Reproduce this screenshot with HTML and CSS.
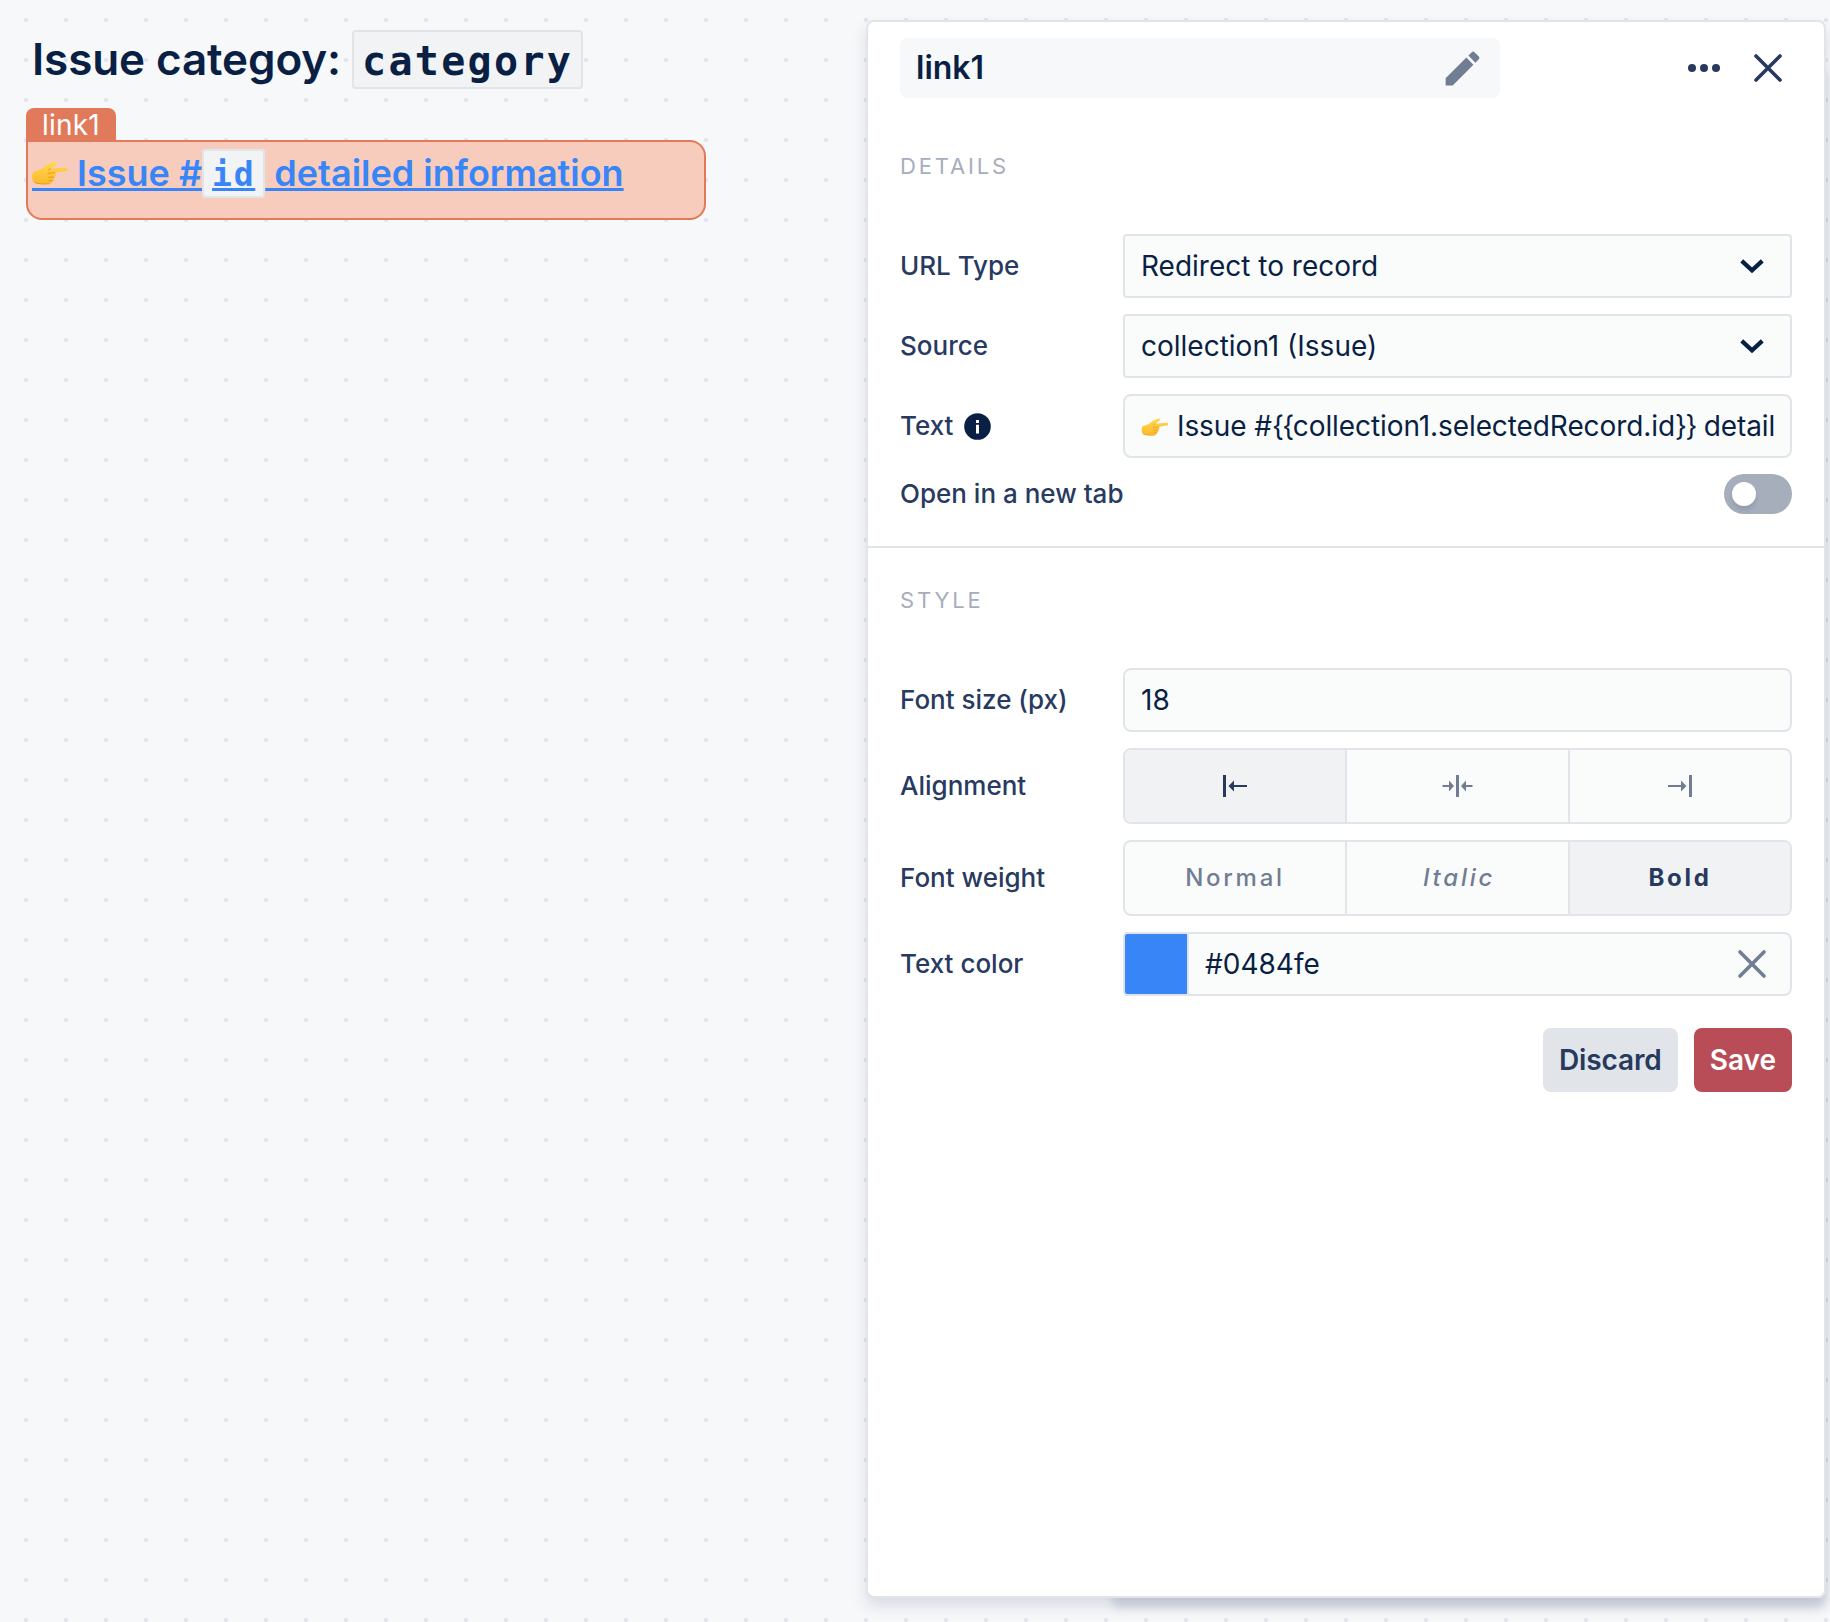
FILE: index.html
```html
<!DOCTYPE html>
<html lang="en">
<head>
<meta charset="utf-8">
<title>link1 settings</title>
<link rel="stylesheet" href="styles.css">
</head>
<body>
<svg class="defs" width="0" height="0" aria-hidden="true">
  <defs>
    <linearGradient id="skin" x1="0" y1="0" x2="0" y2="1">
      <stop offset="0" stop-color="#ffd84f"/>
      <stop offset="1" stop-color="#fdb92c"/>
    </linearGradient>
    <symbol id="hand" viewBox="0 0 36 24">
      <path fill="url(#skin)" d="M1.500 11C5 9.500 8 9 11 7L14 4.500C17 2.500 20 1.500 22.500 .5C25 .2 25.500 2.300 23.500 3.800L18.500 7.600L33.500 6.400C36.500 6.400 36.500 10 33.500 10.100L23.500 11.500C24.500 13 24 15 22.500 15.900C23 17.600 22.300 18.900 20.800 19.400C20.800 21.300 19.500 22.700 17.500 22.800C11 23.400 5.500 22.800 2 21.300C-.3 19.500-.3 13 1.500 11Z"/>
      <path fill="none" stroke="#e9981c" stroke-width="1" stroke-linecap="round" d="M22.500 11.700L16 12.500M21.500 16L17 16.300M20 19.500L17 19.700M3 21.700C7 23 12 23.300 17 22.800M18.500 7.600L16.500 9"/>
    </symbol>
    <symbol id="cross" viewBox="0 0 30 30">
      <path fill="none" stroke="currentColor" stroke-width="3.600" stroke-linecap="round" d="M3 3L27 27M27 3L3 27"/>
    </symbol>
    <symbol id="chevron" viewBox="0 0 24 16">
      <path fill="none" stroke="currentColor" stroke-width="4.200" d="M1.700 2.900L12 12.300L22.300 2.900"/>
    </symbol>
  </defs>
</svg>
<div class="app">
  <main class="canvas">
    <h1 class="heading">Issue categoy: <code class="token token-heading">category</code></h1>
    <div class="widget">
      <span class="widget-tag">link1</span>
      <div class="widget-body">
        <a class="link"><span class="link-emoji"><svg class="hand-lg"><use href="#hand"/></svg></span>Issue #<code class="token">id</code> detailed information</a>
      </div>
    </div>
  </main>

  <div class="panel-wrap">
    <aside class="panel">
      <header class="panel-header">
        <div class="name">
          <span class="name-text">link1</span>
          <svg class="pencil" viewBox="0 0 24 24"><path fill="currentColor" d="M3 17.250V21h3.750L17.810 9.940l-3.750-3.750L3 17.250zM20.710 7.040c.39-.39.39-1.020 0-1.410l-2.340-2.340c-.39-.39-1.020-.39-1.410 0l-1.830 1.830 3.750 3.750 1.830-1.830z"/></svg>
        </div>
        <div class="actions">
          <svg class="more" viewBox="0 0 32 8"><circle cx="4" cy="4" r="4"/><circle cx="16" cy="4" r="4"/><circle cx="28" cy="4" r="4"/></svg>
          <svg class="close"><use href="#cross"/></svg>
        </div>
      </header>

      <section class="section details">
        <h2 class="section-title">DETAILS</h2>
        <div class="row">
          <span class="label">URL Type</span>
          <div class="field select"><span>Redirect to record</span><svg class="chevron"><use href="#chevron"/></svg></div>
        </div>
        <div class="row">
          <span class="label">Source</span>
          <div class="field select"><span>collection1 (Issue)</span><svg class="chevron"><use href="#chevron"/></svg></div>
        </div>
        <div class="row">
          <span class="label">Text
            <svg class="info" viewBox="0 0 27 27"><circle cx="13.500" cy="13.500" r="13.300" fill="#0a1f44"/><path fill="#fff" d="M12 7h3v3h-3zM12 11.800h3V20.500h-3z"/></svg>
          </span>
          <div class="field"><span class="clip"><svg class="hand-sm"><use href="#hand"/></svg>Issue #<span class="brace">{{</span>collection1.selectedRecord.id<span class="brace">}}</span> detailed information</span></div>
        </div>
        <div class="row-toggle">
          <span class="label">Open in a new tab</span>
          <span class="toggle"><span class="knob"></span></span>
        </div>
      </section>

      <section class="section style">
        <h2 class="section-title">STYLE</h2>
        <div class="row">
          <span class="label">Font size (px)</span>
          <div class="field">18</div>
        </div>
        <div class="row">
          <span class="label">Alignment</span>
          <div class="segments">
            <span class="segment active"><svg class="align-icon" viewBox="0 0 32 24"><path d="M4 1h3v22H4zM9.500 12L15 6.500V11H28v2H15v4.500z"/></svg></span>
            <span class="segment"><svg class="align-icon" viewBox="0 0 32 24"><path d="M14 1h3v22h-3zM12 12L7 6.500V11H.500v2H7v4.500zM19 12L24 6.500V11H30.500v2H24v4.500z"/></svg></span>
            <span class="segment"><svg class="align-icon" viewBox="0 0 32 24"><path d="M25 1h3v22h-3zM22.500 12L17 6.500V11H4v2H17v4.500z"/></svg></span>
          </div>
        </div>
        <div class="row">
          <span class="label">Font weight</span>
          <div class="segments segments-text">
            <span class="segment">Normal</span>
            <span class="segment italic">Italic</span>
            <span class="segment active bold">Bold</span>
          </div>
        </div>
        <div class="row">
          <span class="label">Text color</span>
          <div class="field color"><span class="swatch"></span><span class="hex">#0484fe</span><svg class="clear"><use href="#cross"/></svg></div>
        </div>
        <div class="buttons">
          <button class="btn discard">Discard</button>
          <button class="btn save">Save</button>
        </div>
      </section>
    </aside>
  </div>
</div>
</body>
</html>
```
FILE: styles.css
```css
* { box-sizing: border-box; }

body {
  margin: 0;
  font-family: Inter, "Liberation Sans", sans-serif;
  color: #0a1f44;
  background: #f7f8fa;
}

.defs { display: block; height: 0; }

.app {
  display: flex;
  height: 1622px;
  overflow: hidden;
  background-color: #f7f8fa;
  background-image: radial-gradient(circle at 20px 20px, #e1e4e8 1.800px, transparent 2.400px);
  background-size: 40px 40px;
  background-position: 6px 0;
}

.canvas {
  flex: 0 0 866px;
  padding: 30px 26px 0;
}

.heading {
  margin: 0;
  padding-left: 6px;
  height: 78px;
  font-size: 44px;
  line-height: 58px;
  font-weight: 600;
  letter-spacing: -0.100px;
  white-space: nowrap;
}

.token {
  font-family: "DejaVu Sans Mono", monospace;
  font-size: 33px;
  line-height: 0;
  font-weight: 700;
  letter-spacing: 1.730px;
  padding: 4px 8px 2px;
  background: #f1f3f5;
  border: 2px solid #e1e4e8;
  border-radius: 4px;
}

.token-heading {
  font-size: 40px;
  letter-spacing: 2.320px;
  padding: 6px 8px 3px;
}

.widget {
  display: flex;
  flex-direction: column;
  align-items: flex-start;
  width: 680px;
}

.widget-tag {
  height: 32px;
  padding: 0 16px;
  font-size: 28px;
  line-height: 34px;
  font-weight: 400;
  letter-spacing: 0.200px;
  color: #fff;
  background: #e07a5a;
  border-radius: 8px 8px 0 0;
}

.widget-body {
  width: 680px;
  height: 80px;
  padding: 7px 4px;
  background: #f7ccbd;
  border: 2px solid #e07a5a;
  border-radius: 0 16px 16px 16px;
}

.link {
  display: block;
  font-size: 36px;
  line-height: 48px;
  font-weight: 600;
  color: #3785f7;
  white-space: nowrap;
  text-decoration: underline;
  text-decoration-thickness: 3px;
  text-underline-offset: 2px;
  text-decoration-skip-ink: none;
}

.link-emoji {
  display: inline-block;
  overflow: hidden;
  width: 45px;
  height: 30px;
  vertical-align: -5px;
  border-bottom: 3px solid #3785f7;
}

.hand-lg { display: block; width: 36px; height: 24px; }

.panel-wrap {
  position: relative;
  isolation: isolate;
  flex: 0 0 960px;
  margin: 20px 0 24px;
}

.panel-wrap::before {
  content: "";
  position: absolute;
  z-index: -1;
  left: 246px;
  right: 0;
  top: 40px;
  bottom: 0;
  border-radius: 8px;
  box-shadow: 0 10px 8px rgba(60, 70, 120, 0.160);
}

.panel {
  height: 100%;
  background: #fff;
  border: 2px solid #e1e4e9;
  border-radius: 8px;
  box-shadow: 0 8px 16px rgba(10, 31, 68, 0.130);
}

.panel-header {
  display: flex;
  justify-content: space-between;
  padding: 16px 42px 0 32px;
}

.name {
  display: flex;
  align-items: center;
  justify-content: space-between;
  width: 600px;
  height: 60px;
  padding: 0 15px 0 16px;
  background: #f7f8fa;
  border-radius: 8px;
  font-size: 32px;
  font-weight: 600;
}

.name-text { padding-bottom: 2px; }

.pencil { width: 45px; height: 45px; color: #717d93; }

.actions {
  display: flex;
  align-items: center;
  gap: 33px;
  color: #273a5e;
}

.more { width: 32px; height: 8px; fill: currentColor; }
.close { width: 30px; height: 30px; margin-right: -1px; }

.section { padding: 0 32px; }

.details {
  height: 450px;
  padding-top: 54px;
  border-bottom: 2px solid #e1e4e9;
}

.style { padding-top: 38px; }

.section-title {
  margin: 0 0 54px;
  font-size: 22px;
  line-height: 28px;
  font-weight: 400;
  letter-spacing: 2.850px;
  color: #a6aebc;
}

.row {
  display: grid;
  grid-template-columns: 223px 669px;
  align-items: center;
  margin-bottom: 16px;
}

.label {
  display: flex;
  align-items: center;
  gap: 11px;
  font-size: 26px;
  line-height: 32px;
  font-weight: 500;
  color: #283a5f;
  white-space: nowrap;
}

.info { width: 27px; height: 27px; }

.field {
  display: flex;
  align-items: center;
  height: 64px;
  padding: 0 16px;
  font-size: 28px;
  background: #fafcfb;
  border: 2px solid #e1e4e9;
  border-radius: 8px;
}

.select {
  justify-content: space-between;
  padding-right: 26px;
  border-radius: 4px;
}

.chevron { width: 24px; height: 16px; }

.clip {
  flex: 1;
  overflow: hidden;
  white-space: nowrap;
  letter-spacing: -0.090px;
}

.brace { letter-spacing: -1.500px; }

.hand-sm {
  width: 28px;
  height: 18px;
  margin-right: 8px;
  vertical-align: 0;
}

.row-toggle {
  display: flex;
  align-items: center;
  justify-content: space-between;
  height: 40px;
}

.toggle {
  width: 68px;
  height: 40px;
  padding: 8px;
  background: #a6aebc;
  border-radius: 20px;
}

.knob {
  display: block;
  width: 24px;
  height: 24px;
  background: #fff;
  border-radius: 50%;
  box-shadow: 0 4px 4px rgba(39, 58, 94, 0.150);
}

.segments {
  display: grid;
  grid-template-columns: 222px 223px 220px;
  height: 76px;
  overflow: hidden;
  background: #fafcfb;
  border: 2px solid #e1e4e9;
  border-radius: 8px;
}

.segment {
  display: flex;
  align-items: center;
  justify-content: center;
  font-size: 24px;
  font-weight: 500;
  letter-spacing: 2.750px;
  color: #717d93;
  border-right: 2px solid #e1e4e9;
}

.segments-text .segment { padding-bottom: 2px; }
.segment:last-child { border-right: 0; }
.segment.italic { font-style: italic; padding-left: 3px; }
.active { color: #273a5e; background: #f1f2f4; }
.segment.bold { font-weight: 700; }

.align-icon { width: 32px; height: 24px; fill: currentColor; }

.color { padding: 0 23px 0 0; border-radius: 4px 8px 8px 4px; }

.swatch {
  width: 64px;
  height: 60px;
  background: #3785f7;
  border-right: 2px solid #e1e4e9;
  border-radius: 2px 0 0 2px;
}

.hex { flex: 1; padding-left: 16px; }
.clear { width: 30px; height: 30px; color: #717d93; }

.buttons {
  display: flex;
  justify-content: flex-end;
  gap: 16px;
  padding-top: 16px;
}

.btn {
  height: 64px;
  padding: 0 16px;
  border: 0;
  border-radius: 8px;
  font: 600 28px Inter, "Liberation Sans", sans-serif;
}

.discard { color: #273a5e; background: #e1e4e9; letter-spacing: -0.120px; }
.save { color: #fff; background: #b84d57; }
```
